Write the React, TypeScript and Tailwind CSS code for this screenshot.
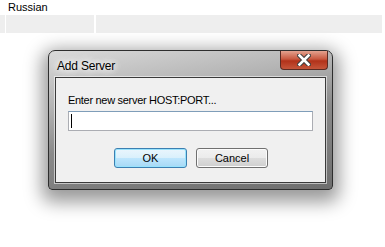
export default function App() {
  return (
    <div className="w-[385px] h-[247px] overflow-hidden bg-white font-['Liberation_Sans',Arial,sans-serif] text-black">
      <div className="h-[15px] pl-[8px] pt-[1px] text-[11px] leading-[12px]">Russian</div>
      <div className="flex h-[18px] w-[382px] bg-[#eeeeee]">
        <div className="w-[6px] border-r border-white" />
        <div className="w-[90px] border-r-2 border-white" />
        <div className="flex-1" />
      </div>

      {/* dialog */}
      <div className="ml-[48px] mt-[17px] flex h-[140px] w-[285px] flex-col rounded-t-[7px] rounded-b-[4px] border border-[#2e2e2e] bg-[linear-gradient(170deg,#dadada_0%,#b4b4b4_30%,#8a8a8a_55%,#6e6e6e_100%)] px-[6px] pb-[6px] shadow-[0_6px_18px_6px_rgba(0,0,0,0.4)]">
        <div className="flex h-[26px] items-start justify-between">
          <div className="pl-[2px] pt-[8px] text-[12px] leading-[14px] tracking-[-0.2px] text-black [text-shadow:0_0_6px_#fff,0_0_10px_#fff,0_0_12px_#fff]">
            Add Server
          </div>
          <div className="mr-[-2px] flex h-[19px] w-[48px] items-center justify-center rounded-b-[4px] border border-t-0 border-[#5a2b23] bg-[linear-gradient(180deg,#e4a28f_0%,#c8583f_45%,#b2321a_55%,#c5553a_100%)]">
            <svg width="14" height="12" viewBox="0 0 14 12">
              <path d="M2.5 1.5 L11.5 10.5 M11.5 1.5 L2.5 10.5" stroke="#3d3d3d" strokeWidth="4.6" fill="none" strokeLinecap="square" />
              <path d="M2.5 1.5 L11.5 10.5 M11.5 1.5 L2.5 10.5" stroke="#ffffff" strokeWidth="2.6" fill="none" strokeLinecap="square" />
            </svg>
          </div>
        </div>
        <div className="flex flex-1 flex-col border border-[#3a3a3a] bg-[#f0f0f0] shadow-[0_0_0_1px_rgba(255,255,255,0.55)] px-[12px] pt-[16px]">
          <div className="text-[11px] leading-[13px] tracking-[-0.3px]">Enter new server HOST:PORT...</div>
          <div className="mt-[4px] flex h-[20px] w-[245px] items-center border border-[#abadb3] border-t-[#7f9db9] bg-white pl-[2px]">
            <div className="h-[14px] w-[1px] bg-black" />
          </div>
          <div className="mt-[17px] flex gap-[9px] pl-[46px]">
            <div className="flex h-[20px] w-[73px] items-center justify-center rounded-[3px] border border-[#3c7fb1] bg-[linear-gradient(180deg,#eaf6fd_0%,#d9f0fc_50%,#bee6fd_51%,#a7d9f5_100%)] text-[11px] shadow-[inset_0_0_0_1px_#98e3fd]">
              OK
            </div>
            <div className="flex h-[20px] w-[72px] items-center justify-center rounded-[3px] border border-[#707070] bg-[linear-gradient(180deg,#f2f2f2_0%,#ebebeb_50%,#dddddd_51%,#cfcfcf_100%)] text-[11px] shadow-[inset_0_0_0_1px_#fcfcfc]">
              Cancel
            </div>
          </div>
        </div>
      </div>
    </div>
  );
}
